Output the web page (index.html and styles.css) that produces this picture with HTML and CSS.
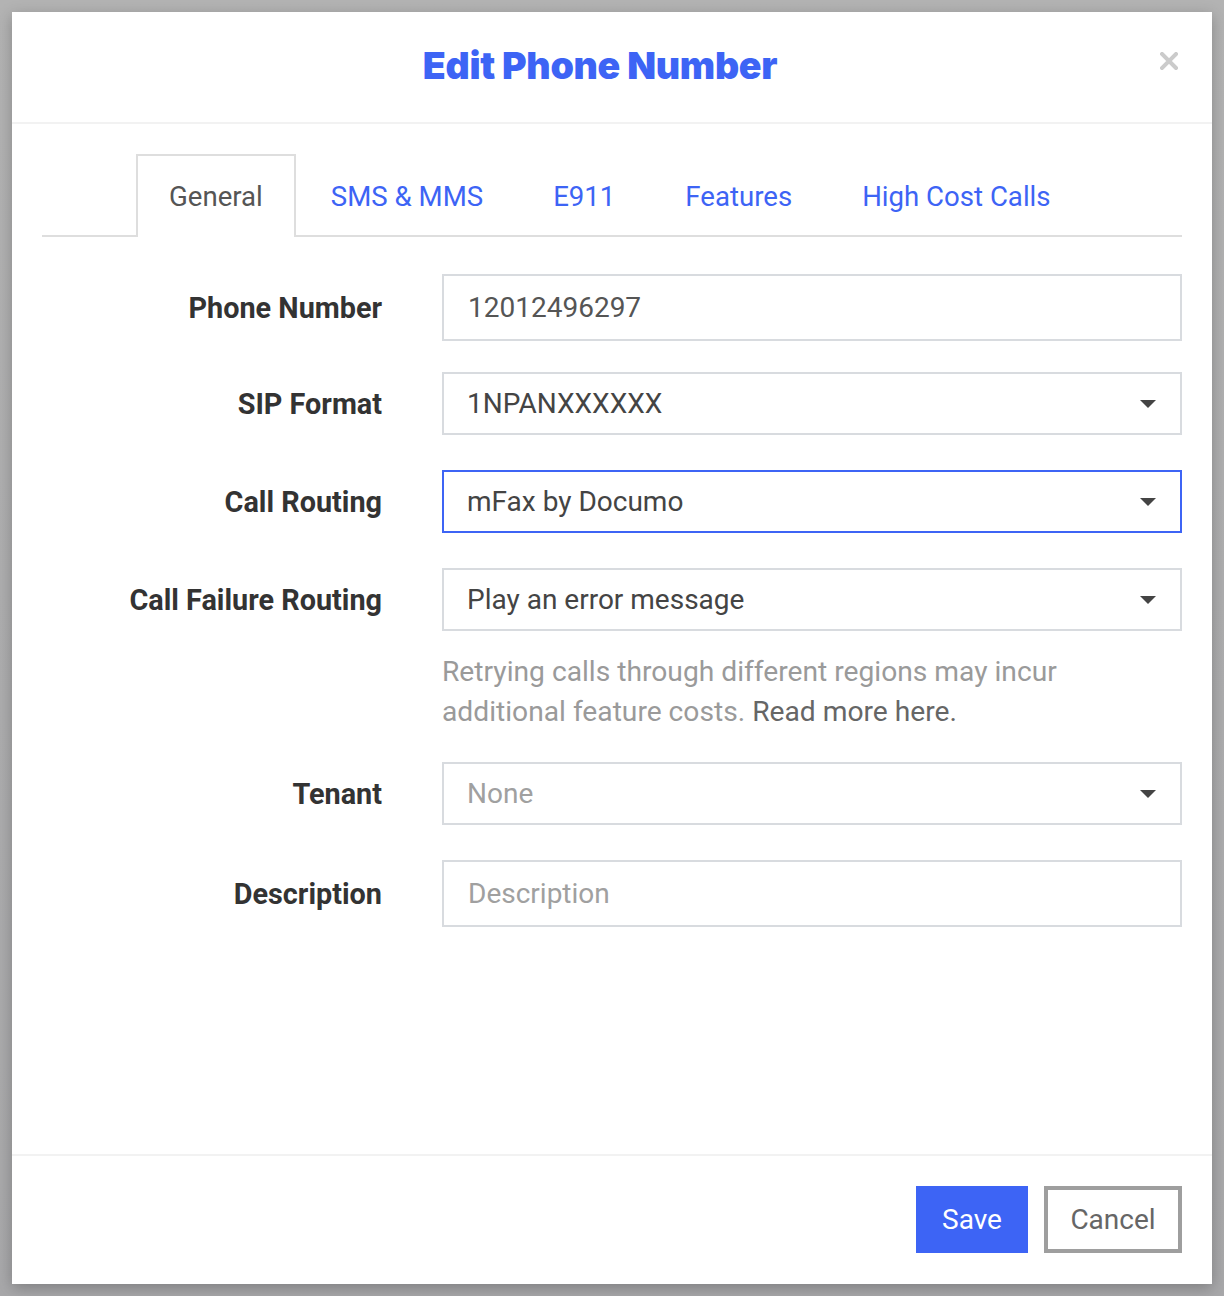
FILE: index.html
```html
<!DOCTYPE html>
<html>
<head>
<link rel="stylesheet" href="styles.css">
</head>
<body>

<div class="backdrop">
  <div class="modal">
    <!-- 标题栏 -->
    <div class="modal-header">
      <h2 class="modal-title">Edit Phone Number</h2>
      <button class="close-btn" aria-label="Close">
        <svg width="18" height="18" viewBox="0 0 18 18">
          <path d="M2 2 L16 16 M16 2 L2 16" stroke="#cbcbcb" stroke-width="4" stroke-linecap="square"/>
        </svg>
      </button>
    </div>

    <div class="modal-body">
      <!-- 选项卡 -->
      <ul class="tabs">
        <li class="tab active">General</li>
        <li class="tab">SMS &amp; MMS</li>
        <li class="tab">E911</li>
        <li class="tab">Features</li>
        <li class="tab">High Cost Calls</li>
      </ul>

      <!-- 表单 -->
      <div class="form">
        <div class="form-row row-input">
          <label>Phone Number</label>
          <input type="text" class="field" value="12012496297">
        </div>

        <div class="form-row">
          <label>SIP Format</label>
          <div class="select-wrap">
            <select class="field">
              <option>1NPANXXXXXX</option>
            </select>
          </div>
        </div>

        <div class="form-row">
          <label>Call Routing</label>
          <div class="select-wrap">
            <select class="field focused">
              <option>mFax by Documo</option>
            </select>
          </div>
        </div>

        <div class="form-row row-tight">
          <label>Call Failure Routing</label>
          <div class="select-wrap">
            <select class="field">
              <option>Play an error message</option>
            </select>
          </div>
        </div>

        <div class="form-row help-row">
          <span></span>
          <p class="help">Retrying calls through different regions may incur<br>additional feature costs. <span class="help-link">Read more here.</span></p>
        </div>

        <div class="form-row">
          <label>Tenant</label>
          <div class="select-wrap">
            <select class="field muted">
              <option>None</option>
            </select>
          </div>
        </div>

        <div class="form-row row-input">
          <label>Description</label>
          <input type="text" class="field" placeholder="Description">
        </div>
      </div>
    </div>

    <!-- 底部按钮 -->
    <div class="modal-footer">
      <button class="btn btn-primary">Save</button>
      <button class="btn btn-default">Cancel</button>
    </div>
  </div>
</div>

</body>
</html>
```

FILE: styles.css
```css
/* 基础 */
* {
  box-sizing: border-box;
}
body {
  margin: 0;
  font-family: Roboto, "Liberation Sans", sans-serif;
  color: #333;
}
.backdrop {
  width: 1224px;
  height: 1296px;
  padding: 12px;
  background: linear-gradient(#b3b3b3, #a8a8aa);
}

/* 弹窗 */
.modal {
  width: 1200px;
  height: 1272px;
  background: #fff;
  display: flex;
  flex-direction: column;
  box-shadow: 0 4px 14px rgba(0, 0, 0, 0.25);
}
.modal-header {
  position: relative;
  height: 112px;
  border-bottom: 2px solid #f2f2f2;
  padding: 30px 24px 0 0;
}
.modal-title {
  margin: 0;
  text-align: center;
  font-family: Inter, "Open Sans", sans-serif;
  font-weight: 900;
  font-size: 37.5px;
  line-height: 48px;
  letter-spacing: -0.3px;
  color: #3d64f5;
}
.close-btn {
  position: absolute;
  right: 32px;
  top: 38px;
  width: 22px;
  height: 22px;
  padding: 2px;
  border: none;
  background: none;
  cursor: pointer;
}
.modal-body {
  flex: 1;
  padding: 30px;
}

/* 选项卡 */
.tabs {
  list-style: none;
  margin: 0;
  padding: 0 0 0 94px;
  display: flex;
  border-bottom: 2px solid #dedede;
}
.tab {
  height: 83px;
  line-height: 81px;
  padding: 0 33px;
  margin-bottom: -2px;
  border: 2px solid transparent;
  border-bottom: none;
  font-size: 27.6px;
  color: #3d64f5;
  cursor: pointer;
}
.tab.active {
  color: #555;
  background: #fff;
  border-color: #dedede;
  padding: 0 31px;
}

/* 表单 */
.form {
  margin-top: 37px;
}
.form-row {
  display: grid;
  grid-template-columns: 340px 740px;
  column-gap: 60px;
  align-items: center;
  margin-bottom: 35px;
}
.form-row.row-input {
  margin-bottom: 31px;
}
.form-row.row-tight {
  margin-bottom: 0;
}
.form-row label {
  text-align: right;
  font-weight: 700;
  font-size: 28.8px;
  color: #333;
}
.field {
  width: 100%;
  height: 63px;
  padding: 0 23px;
  border: 2px solid #d8dbdf;
  border-radius: 0;
  background: #fff;
  font-family: Roboto, "Liberation Sans", sans-serif;
  font-size: 28px;
  color: #444;
  outline: none;
  appearance: none;
  -webkit-appearance: none;
}
input.field {
  height: 67px;
  padding: 0 24px;
  color: #555;
}
input.field::placeholder {
  color: #a0a0a0;
}
.field.focused {
  border-color: #3d64f5;
}
.field.muted {
  color: #a0a0a0;
}
.select-wrap {
  position: relative;
}
.select-wrap::after {
  content: "";
  position: absolute;
  right: 26px;
  top: 28px;
  border-left: 8px solid transparent;
  border-right: 8px solid transparent;
  border-top: 8px solid #444;
  pointer-events: none;
}
.help-row {
  margin: 21px 0 30px;
}
.help {
  grid-column: 2;
  margin: 0;
  font-size: 28.2px;
  line-height: 40px;
  color: #9a9a9a;
}
.help-link {
  color: #666;
}

/* 底部 */
.modal-footer {
  height: 130px;
  border-top: 2px solid #f2f2f2;
  padding: 30px;
  display: flex;
  justify-content: flex-end;
  gap: 16px;
}
.btn {
  height: 67px;
  font-family: Roboto, "Liberation Sans", sans-serif;
  font-size: 28px;
  cursor: pointer;
}
.btn-primary {
  width: 112px;
  border: none;
  background: #3d64f5;
  color: #fff;
}
.btn-default {
  width: 138px;
  border: 4px solid #9e9e9e;
  background: #fff;
  color: #666;
}
```
